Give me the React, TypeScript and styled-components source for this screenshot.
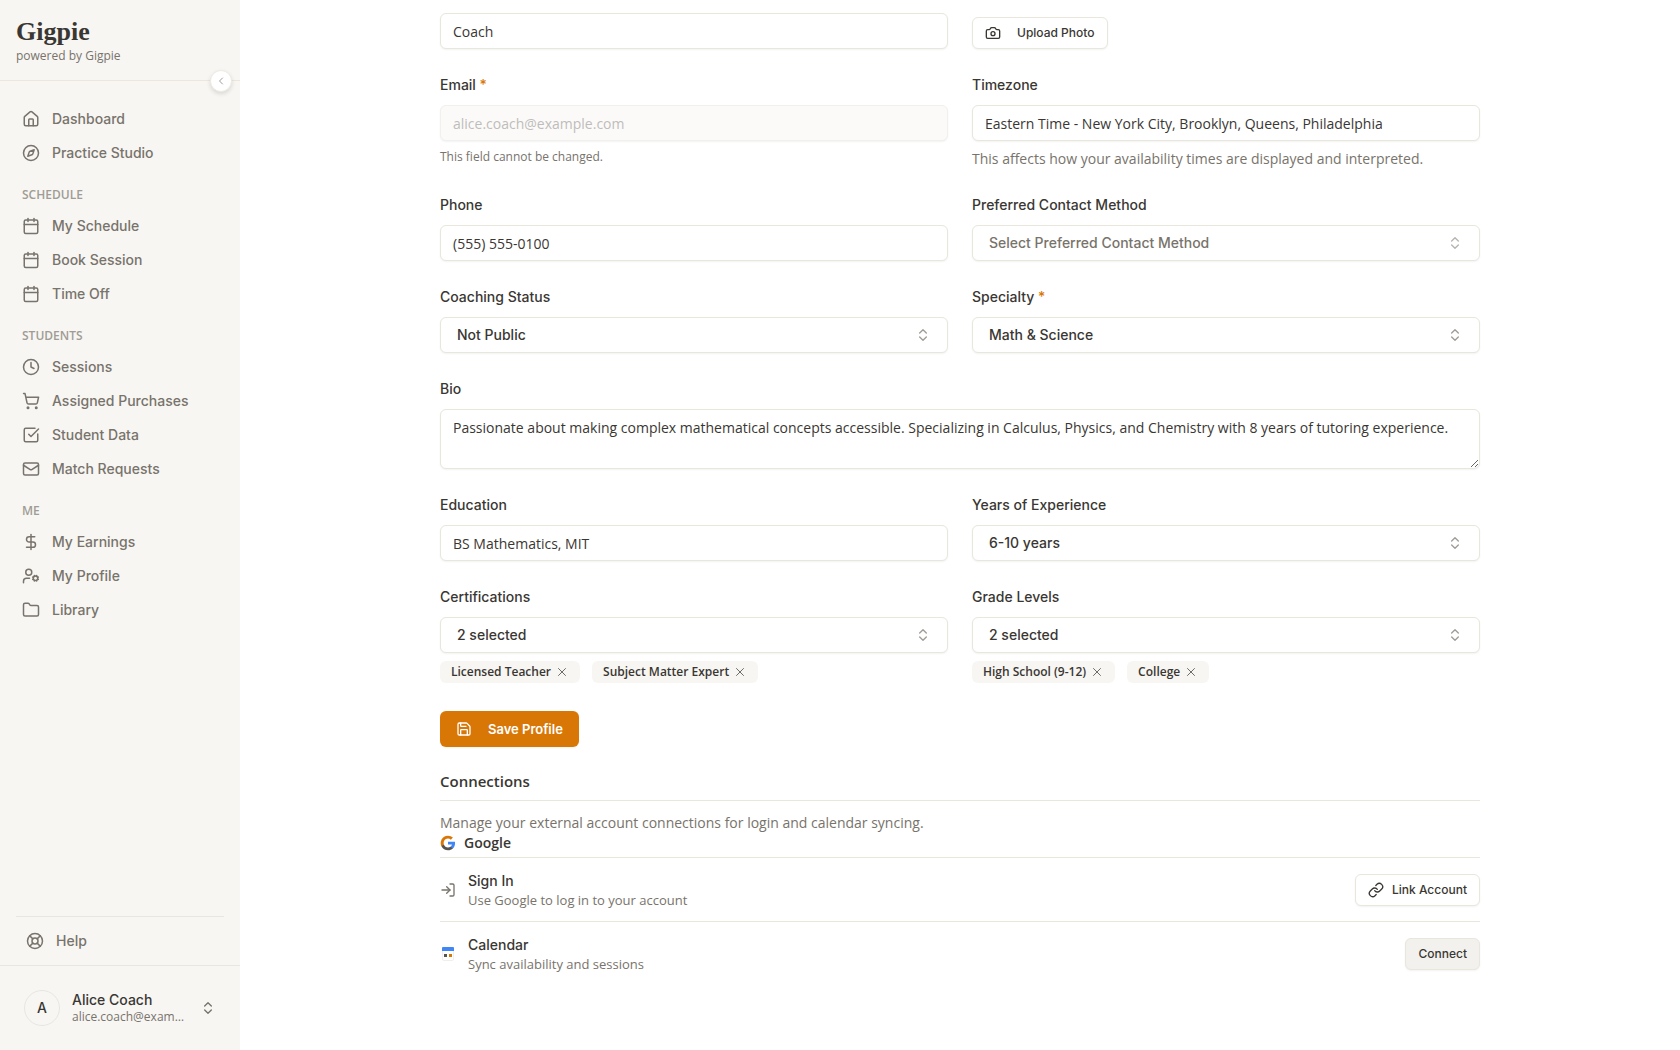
import React from 'react';
import styled, { createGlobalStyle, css } from 'styled-components';
import {
  Calendar,
  Camera,
  ChevronLeft,
  ChevronsUpDown,
  Clock,
  Compass,
  DollarSign,
  Folder,
  House,
  LifeBuoy,
  Link as LinkIcon,
  LogIn,
  Mail,
  Save,
  ShoppingCart,
  SquareCheckBig,
  UserCog,
  X,
} from 'lucide-react';

const color = {
  ink: '#3a3733',
  muted: '#78736b',
  faint: '#a09c95',
  line: '#e9e6dc',
  sideLine: '#e8e6e1',
  side: '#f7f6f3',
  accent: '#d97706',
  blue: '#4285f4',
};

const medium = css`
  font-family: Inter, "Open Sans", sans-serif;
  font-weight: 500;
`;

const Global = createGlobalStyle`
  *, *::before, *::after { box-sizing: border-box; }
  body {
    margin: 0;
    background: #fff;
    color: ${color.ink};
    font-family: "Open Sans", "Noto Sans", sans-serif;
    font-size: 14px;
    line-height: 20px;
    -webkit-font-smoothing: antialiased;
  }
  button, input, select, textarea { font: inherit; color: inherit; margin: 0; }
  button { cursor: pointer; }
`;

const Shell = styled.div`
  display: flex;
  align-items: flex-start;
  min-height: 100vh;
`;

/* ---------- sidebar ---------- */

const Sidebar = styled.aside`
  position: sticky;
  top: 0;
  display: flex;
  flex-direction: column;
  flex: 0 0 240px;
  min-width: 0;
  height: 100vh;
  background: ${color.side};
`;

const Brand = styled.header`
  position: relative;
  padding: 16px;
  border-bottom: 1px solid #ece6dd;
`;

const BrandName = styled.div`
  font-family: "Liberation Serif", serif;
  font-weight: 700;
  font-size: 26px;
  line-height: 32px;
`;

const BrandNote = styled.div`
  font-size: 12px;
  line-height: 16px;
  color: ${color.muted};
`;

const Collapse = styled.button`
  position: absolute;
  right: 8px;
  bottom: -12px;
  display: grid;
  place-items: center;
  width: 22px;
  height: 22px;
  padding: 0;
  border: 1px solid #eeebe4;
  border-radius: 50%;
  background: #fff;
  color: ${color.faint};
  box-shadow: 0 2px 4px rgba(0, 0, 0, 0.12);
`;

const Nav = styled.nav`
  flex: 1;
  padding: 21px 16px 0;
`;

const NavHeading = styled.h2`
  margin: 0;
  padding: 17px 6px 6px;
  font-size: 12px;
  line-height: 16px;
  font-weight: 600;
  color: ${color.faint};
`;

const NavList = styled.ul`
  margin: 0;
  padding: 0;
  list-style: none;
`;

const NavLink = styled.a<{ $inset?: number }>`
  ${medium}
  display: flex;
  align-items: center;
  gap: 12px;
  height: 34px;
  padding: 0 ${(p) => p.$inset ?? 6}px;
  color: ${color.muted};
  text-decoration: none;
`;

const HelpArea = styled.div`
  margin: 0 16px;
  padding: 7px 0;
  border-top: 1px solid ${color.sideLine};
`;

const Account = styled.button`
  display: flex;
  align-items: center;
  gap: 12px;
  width: 100%;
  height: 85px;
  padding: 0 24px;
  border: 0;
  border-top: 1px solid ${color.sideLine};
  background: none;
  text-align: left;
`;

const Avatar = styled.span`
  ${medium}
  display: grid;
  place-items: center;
  flex: 0 0 36px;
  height: 36px;
  border: 1px solid ${color.sideLine};
  border-radius: 50%;
`;

const Who = styled.span`
  flex: 1;
  min-width: 0;
`;

const WhoName = styled.span`
  ${medium}
  display: block;
  line-height: 18px;
`;

const WhoMail = styled.span`
  display: block;
  overflow: hidden;
  font-size: 12px;
  line-height: 16px;
  color: ${color.muted};
  white-space: nowrap;
  text-overflow: ellipsis;
`;

/* ---------- form ---------- */

const Main = styled.main`
  flex: 1;
  min-width: 0;
  padding: 13px 24px 64px;
`;

const Content = styled.div`
  max-width: 1040px;
  margin: 0 auto;
`;

const Form = styled.form`
  display: grid;
  grid-template-columns: repeat(2, minmax(0, 1fr));
  gap: 24px;
`;

const Field = styled.div<{ $wide?: boolean; $end?: boolean }>`
  display: flex;
  flex-direction: column;
  align-items: flex-start;
  gap: 8px;
  ${(p) => p.$wide && css`grid-column: 1 / -1;`}
  ${(p) => p.$end && css`justify-content: flex-end;`}
`;

const Label = styled.label`
  ${medium}
  line-height: 24px;
`;

const Required = styled.span`
  color: ${color.accent};
`;

const controlBox = css`
  width: 100%;
  border: 1px solid ${color.line};
  border-radius: 6px;
  background: #fff;
  box-shadow: 0 1px 2px rgba(0, 0, 0, 0.05);
`;

const Input = styled.input`
  ${controlBox}
  height: 36px;
  padding: 0 12px;

  &:disabled {
    background: #fbfaf9;
    border-color: #f2f0ec;
    color: #bfbdb9;
  }
`;

const Textarea = styled.textarea`
  ${controlBox}
  display: block;
  height: 60px;
  padding: 8px 12px;
  resize: vertical;
`;

const PickerWrap = styled.div<{ $dim?: boolean }>`
  position: relative;
  width: 100%;

  svg {
    position: absolute;
    top: 10px;
    right: 17px;
    color: ${color.faint};
    opacity: ${(p) => (p.$dim ? 0.75 : 1)};
    pointer-events: none;
  }
`;

const pickerText = css`
  ${controlBox}
  ${medium}
  display: block;
  height: 36px;
  padding: 0 40px 0 16px;
  text-align: left;
`;

const Select = styled.select<{ $dim?: boolean }>`
  ${pickerText}
  appearance: none;
  color: ${(p) => (p.$dim ? color.muted : color.ink)};
`;

const PickerButton = styled.button`
  ${pickerText}
`;

const Hint = styled.p<{ $small?: boolean }>`
  margin: 0;
  font-size: ${(p) => (p.$small ? 12 : 14)}px;
  line-height: ${(p) => (p.$small ? 16 : 20)}px;
  color: ${color.muted};
`;

const Tags = styled.div`
  display: flex;
  flex-wrap: wrap;
  gap: 12px;
`;

const Tag = styled.span`
  display: inline-flex;
  align-items: center;
  gap: 4px;
  height: 22px;
  padding: 0 11px;
  border-radius: 6px;
  background: ${color.side};
  font-size: 12px;
  line-height: 16px;
  font-weight: 600;
`;

const TagRemove = styled.button`
  display: grid;
  place-items: center;
  width: 14px;
  height: 14px;
  padding: 0;
  border: 0;
  background: none;
`;

const Button = styled.button<{ $kind?: 'outline' | 'soft' | 'primary'; $gap?: number }>`
  ${medium}
  display: inline-flex;
  align-items: center;
  gap: ${(p) => p.$gap ?? 8}px;
  height: 32px;
  padding: 0 12px;
  border: 1px solid ${color.line};
  border-radius: 6px;
  background: ${(p) => (p.$kind === 'soft' ? '#f2f1ee' : '#fff')};
  box-shadow: 0 1px 2px rgba(0, 0, 0, 0.05);
  color: ${color.ink};
  font-size: 12px;
  white-space: nowrap;

  ${(p) =>
    p.$kind === 'primary' &&
    css`
      height: 36px;
      padding: 0 16px;
      border: 0;
      background: ${color.accent};
      color: #fff;
      font-size: 13px;
      font-weight: 600;
    `}
`;

const Actions = styled.div`
  grid-column: 1 / -1;
  padding-top: 4px;
`;

/* ---------- connections ---------- */

const SectionTitle = styled.h2`
  margin: 24px 0 0;
  padding-bottom: 8px;
  border-bottom: 1px solid ${color.line};
  font-size: 15px;
  line-height: 21px;
  font-weight: 600;
`;

const SectionText = styled.p`
  margin: 12px 0 0;
  color: ${color.muted};
`;

const Provider = styled.h3`
  display: flex;
  align-items: center;
  gap: 8px;
  margin: 0;
  padding-bottom: 4px;
  font-size: 14px;
  line-height: 20px;
  font-weight: 600;
`;

const Connection = styled.div`
  display: flex;
  align-items: center;
  gap: 12px;
  height: 64px;
  border-top: 1px solid ${color.line};
  color: ${color.muted};
`;

const ConnectionText = styled.div`
  flex: 1;
  font-size: 13px;
  line-height: 18px;
`;

const ConnectionName = styled.div`
  ${medium}
  font-size: 14px;
  line-height: 20px;
  color: ${color.ink};
`;

function GoogleMark() {
  return (
    <svg width="16" height="16" viewBox="0 0 24 24" aria-hidden="true">
      <path fill="#4285f4" d="M22.56 12.25c0-.78-.07-1.53-.2-2.25H12v4.26h5.92a5.06 5.06 0 0 1-2.2 3.32v2.77h3.57c2.08-1.92 3.27-4.74 3.27-8.1z" />
      <path fill="#57534e" d="M12 23c2.97 0 5.46-.98 7.28-2.66l-3.57-2.77c-.98.66-2.23 1.06-3.71 1.06-2.86 0-5.29-1.93-6.16-4.53H2.18v2.84A11 11 0 0 0 12 23z" />
      <path fill="#d97706" d="M5.84 14.09a6.6 6.6 0 0 1 0-4.18V7.07H2.18a11 11 0 0 0 0 9.86l3.66-2.84z" />
      <path fill="#d97706" d="M12 5.38c1.62 0 3.06.56 4.21 1.64l3.15-3.15A10.6 10.6 0 0 0 12 1 11 11 0 0 0 2.18 7.07l3.66 2.84C6.71 7.31 9.14 5.38 12 5.38z" />
    </svg>
  );
}

function CalendarMark() {
  return (
    <svg width="16" height="16" viewBox="0 0 16 16" aria-hidden="true">
      <rect x="2.5" y="1.5" width="11" height="13" rx="1.5" fill="#fff" stroke="#f1efeb" />
      <path d="M2 5V2a1 1 0 0 1 1-1h10a1 1 0 0 1 1 1v3z" fill={color.blue} />
      <rect x="4" y="8" width="3" height="3" fill="#57534e" />
      <rect x="9" y="8" width="3" height="3" fill="#d97706" />
    </svg>
  );
}

const groups = [
  {
    items: [
      { icon: House, text: 'Dashboard' },
      { icon: Compass, text: 'Practice Studio' },
    ],
  },
  {
    title: 'SCHEDULE',
    items: [
      { icon: Calendar, text: 'My Schedule' },
      { icon: Calendar, text: 'Book Session' },
      { icon: Calendar, text: 'Time Off' },
    ],
  },
  {
    title: 'STUDENTS',
    items: [
      { icon: Clock, text: 'Sessions' },
      { icon: ShoppingCart, text: 'Assigned Purchases' },
      { icon: SquareCheckBig, text: 'Student Data' },
      { icon: Mail, text: 'Match Requests' },
    ],
  },
  {
    title: 'ME',
    items: [
      { icon: DollarSign, text: 'My Earnings' },
      { icon: UserCog, text: 'My Profile' },
      { icon: Folder, text: 'Library' },
    ],
  },
];

function Choice(props: { id: string; label: string; value: string; required?: boolean; dim?: boolean }) {
  return (
    <Field>
      <Label htmlFor={props.id}>
        {props.label}
        {props.required && <Required> *</Required>}
      </Label>
      <PickerWrap $dim={props.dim}>
        <Select id={props.id} $dim={props.dim} defaultValue={props.value}>
          <option>{props.value}</option>
        </Select>
        <ChevronsUpDown size={16} />
      </PickerWrap>
    </Field>
  );
}

function MultiChoice(props: { id: string; label: string; tags: string[] }) {
  return (
    <Field>
      <Label htmlFor={props.id}>{props.label}</Label>
      <PickerWrap>
        <PickerButton id={props.id} type="button" aria-haspopup="listbox">
          {props.tags.length} selected
        </PickerButton>
        <ChevronsUpDown size={16} />
      </PickerWrap>
      <Tags>
        {props.tags.map((tag) => (
          <Tag key={tag}>
            {tag}
            <TagRemove type="button" aria-label={`Remove ${tag}`}>
              <X size={14} strokeWidth={1.25} />
            </TagRemove>
          </Tag>
        ))}
      </Tags>
    </Field>
  );
}

export default function App() {
  return (
    <Shell>
      <Global />
      <Sidebar>
        <Brand>
          <BrandName>Gigpie</BrandName>
          <BrandNote>powered by Gigpie</BrandNote>
          <Collapse type="button" aria-label="Collapse sidebar">
            <ChevronLeft size={12} />
          </Collapse>
        </Brand>
        <Nav>
          {groups.map((group, i) => (
            <React.Fragment key={i}>
              {group.title && <NavHeading>{group.title}</NavHeading>}
              <NavList>
                {group.items.map(({ icon: Icon, text }) => (
                  <li key={text}>
                    <NavLink href="#">
                      <Icon size={18} />
                      {text}
                    </NavLink>
                  </li>
                ))}
              </NavList>
            </React.Fragment>
          ))}
        </Nav>
        <HelpArea>
          <NavLink href="#" $inset={10}>
            <LifeBuoy size={18} />
            Help
          </NavLink>
        </HelpArea>
        <Account type="button">
          <Avatar>A</Avatar>
          <Who>
            <WhoName>Alice Coach</WhoName>
            <WhoMail>alice.coach@example.com</WhoMail>
          </Who>
          <ChevronsUpDown size={16} color={color.muted} />
        </Account>
      </Sidebar>

      <Main>
        <Content>
          <Form onSubmit={(e) => e.preventDefault()}>
            <Field>
              <Input aria-label="Last name" defaultValue="Coach" />
            </Field>
            <Field $end>
              <Button type="button" $gap={16}>
                <Camera size={16} />
                Upload Photo
              </Button>
            </Field>

            <Field>
              <Label htmlFor="email">
                Email<Required> *</Required>
              </Label>
              <Input id="email" type="email" disabled defaultValue="alice.coach@example.com" />
              <Hint $small>This field cannot be changed.</Hint>
            </Field>
            <Field>
              <Label htmlFor="timezone">Timezone</Label>
              <Input
                id="timezone"
                defaultValue="Eastern Time - New York City, Brooklyn, Queens, Philadelphia"
              />
              <Hint>This affects how your availability times are displayed and interpreted.</Hint>
            </Field>

            <Field>
              <Label htmlFor="phone">Phone</Label>
              <Input id="phone" type="tel" defaultValue="(555) 555-0100" />
            </Field>
            <Choice id="contact" label="Preferred Contact Method" value="Select Preferred Contact Method" dim />

            <Choice id="status" label="Coaching Status" value="Not Public" />
            <Choice id="specialty" label="Specialty" value="Math & Science" required />

            <Field $wide>
              <Label htmlFor="bio">Bio</Label>
              <Textarea
                id="bio"
                defaultValue="Passionate about making complex mathematical concepts accessible. Specializing in Calculus, Physics, and Chemistry with 8 years of tutoring experience."
              />
            </Field>

            <Field>
              <Label htmlFor="education">Education</Label>
              <Input id="education" defaultValue="BS Mathematics, MIT" />
            </Field>
            <Choice id="experience" label="Years of Experience" value="6-10 years" />

            <MultiChoice id="certifications" label="Certifications" tags={['Licensed Teacher', 'Subject Matter Expert']} />
            <MultiChoice id="grades" label="Grade Levels" tags={['High School (9-12)', 'College']} />

            <Actions>
              <Button type="submit" $kind="primary" $gap={16}>
                <Save size={16} />
                Save Profile
              </Button>
            </Actions>
          </Form>

          <SectionTitle>Connections</SectionTitle>
          <SectionText>Manage your external account connections for login and calendar syncing.</SectionText>
          <Provider>
            <GoogleMark />
            Google
          </Provider>
          <Connection>
            <LogIn size={16} />
            <ConnectionText>
              <ConnectionName>Sign In</ConnectionName>
              Use Google to log in to your account
            </ConnectionText>
            <Button type="button">
              <LinkIcon size={16} />
              Link Account
            </Button>
          </Connection>
          <Connection>
            <CalendarMark />
            <ConnectionText>
              <ConnectionName>Calendar</ConnectionName>
              Sync availability and sessions
            </ConnectionText>
            <Button type="button" $kind="soft">
              Connect
            </Button>
          </Connection>
        </Content>
      </Main>
    </Shell>
  );
}
